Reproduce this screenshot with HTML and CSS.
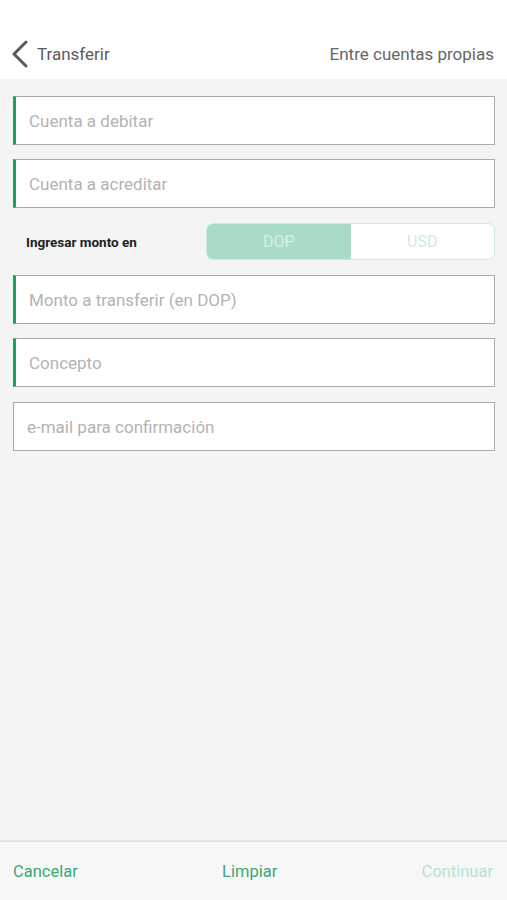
FILE: index.html
```html
<!DOCTYPE html>
<html lang="es">
<head>
  <meta charset="UTF-8" />
  <title>Transferir</title>
  <link rel="stylesheet" href="styles.css">
</head>
<body>
  <div class="app">
    <header class="topbar">
      <a class="back" href="#">
        <svg width="18" height="28" viewBox="0 0 18 28">
          <path d="M15 2 L3 14 L15 26" fill="none" stroke="#5a5a5a" stroke-width="3" stroke-linecap="round" stroke-linejoin="round"/>
        </svg>
        <span>Transferir</span>
      </a>
      <span class="subtitle">Entre cuentas propias</span>
    </header>

    <main class="content">
      <div class="field required">Cuenta a debitar</div>
      <div class="field required">Cuenta a acreditar</div>

      <div class="currency-row">
        <span class="currency-label">Ingresar monto en</span>
        <div class="toggle">
          <span class="toggle-opt active">DOP</span>
          <span class="toggle-opt">USD</span>
        </div>
      </div>

      <div class="field required">Monto a transferir (en DOP)</div>
      <div class="field required">Concepto</div>
      <div class="field email">e-mail para confirmación</div>
    </main>

    <footer class="actions">
      <a href="#" class="action">Cancelar</a>
      <a href="#" class="action">Limpiar</a>
      <a href="#" class="action disabled">Continuar</a>
    </footer>
  </div>
</body>
</html>
```

FILE: styles.css
```css
* {
  box-sizing: border-box;
}

body {
  margin: 0;
  font-family: Roboto, 'Noto Sans', sans-serif;
  background: #f4f4f4;
}

.app {
  display: flex;
  flex-direction: column;
  height: 900px;
}

.topbar {
  height: 79px;
  background: #fff;
  display: flex;
  align-items: center;
  justify-content: space-between;
  padding: 28px 13px 0 11px;
}

.back {
  display: flex;
  align-items: center;
  gap: 8px;
  text-decoration: none;
  color: #5c5c5c;
  font-size: 17px;
}

.subtitle {
  color: #666;
  font-size: 17px;
}

.content {
  flex: 1;
  display: flex;
  flex-direction: column;
  gap: 14px;
  padding: 17px 12px 0 13px;
}

.field {
  height: 49px;
  background: #fff;
  border: 1.5px solid #aaa;
  display: flex;
  align-items: center;
  padding-left: 13px;
  color: #b3b3b3;
  font-size: 17px;
}

.field.required {
  border-left: 3.5px solid #1aa45a;
}

.field.email {
  margin-top: 1px;
}

.currency-row {
  display: flex;
  align-items: center;
  justify-content: space-between;
  height: 37px;
  margin: 1px 0 1px;
}

.currency-label {
  font-size: 13.5px;
  font-weight: 700;
  color: #222;
  padding-left: 13px;
}

.toggle {
  display: flex;
  width: 289px;
  height: 37px;
  border: 1.5px solid #cdebdc;
  border-radius: 7px;
  overflow: hidden;
  background: #fff;
}

.toggle-opt {
  flex: 1;
  display: flex;
  align-items: center;
  justify-content: center;
  font-size: 16px;
  color: #cfeadd;
}

.toggle-opt.active {
  background: #a8dcc4;
  color: #d8f1e5;
}

.actions {
  height: 60px;
  border-top: 2px solid #e2e2e2;
  background: #f7f7f7;
  display: flex;
  align-items: center;
  justify-content: space-between;
  padding: 0 14px 0 13px;
}

.action {
  text-decoration: none;
  color: #3aa874;
  font-size: 16.5px;
}

.action.disabled {
  color: #b8e1cd;
}
```
